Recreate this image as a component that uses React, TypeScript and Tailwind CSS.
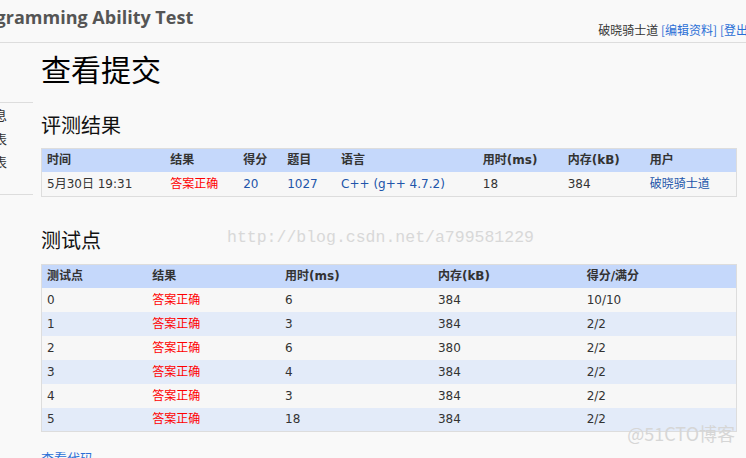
import React from 'react';

const summaryCols = [124, 73, 44, 54, 142, 85, 82, 92];
const caseCols = [106, 133, 153, 149, 155];

const cases = [
  { id: '0', time: '6', mem: '384', score: '10/10' },
  { id: '1', time: '3', mem: '384', score: '2/2' },
  { id: '2', time: '6', mem: '380', score: '2/2' },
  { id: '3', time: '4', mem: '384', score: '2/2' },
  { id: '4', time: '3', mem: '384', score: '2/2' },
  { id: '5', time: '18', mem: '384', score: '2/2' },
];

const cjk = { fontFamily: '"Noto Sans CJK SC", "Noto Sans", sans-serif' };
const cell = { fontFamily: '"DejaVu Sans", "Noto Sans CJK SC", sans-serif' };

const App: React.FC = () => {
  return (
    <div className="w-[746px] h-[458px] overflow-hidden bg-[#f9f9f9] text-[#333]" style={cjk}>
      {/* 顶部栏 */}
      <div className="h-[43px] border-b border-[#dddddd] flex overflow-hidden">
        <div
          className="shrink-0 -ml-[35px] pt-[4px] text-[18px] font-bold text-[#555] whitespace-nowrap"
          style={{ fontFamily: '"Open Sans", sans-serif' }}
        >
          Programming Ability Test
        </div>
        <div className="shrink-0 ml-auto pt-[21px] text-[12px] whitespace-nowrap -mr-[6px]">
          破晓骑士道 <span className="text-[#2a6fd6]">[编辑资料]</span>{' '}
          <span className="text-[#2a6fd6]">[登出]</span>
        </div>
      </div>

      <div className="flex">
        {/* 左侧导航 */}
        <div className="w-[33px] shrink-0 overflow-hidden pt-[59px]">
          <div className="border-t border-[#dddddd] pb-[20px] border-b text-[13px] leading-[23.5px]">
            <div className="-ml-[45px] whitespace-nowrap">个人信息</div>
            <div className="-ml-[32px] whitespace-nowrap">排名表</div>
            <div className="-ml-[32px] whitespace-nowrap">提交表</div>
          </div>
        </div>

        {/* 主内容 */}
        <div className="ml-[8px] w-[696px]">
          <h1 className="mt-[5px] text-[30px] leading-[40px] text-black">查看提交</h1>

          <h2 className="mt-[23px] text-[20px] leading-[28px] text-[#111]">评测结果</h2>
          <table className="mt-[9px] table-fixed border-collapse border border-[#dddddd] text-[12px]" style={cell}>
            <colgroup>
              {summaryCols.map((w, i) => (
                <col key={i} style={{ width: w }} />
              ))}
            </colgroup>
            <thead>
              <tr className="bg-[#c5d8fb] h-[23px] text-left">
                <th className="pl-[5px] font-bold">时间</th>
                <th className="pl-[5px] font-bold">结果</th>
                <th className="pl-[5px] font-bold">得分</th>
                <th className="pl-[5px] font-bold">题目</th>
                <th className="pl-[5px] font-bold">语言</th>
                <th className="pl-[5px] font-bold">用时(ms)</th>
                <th className="pl-[5px] font-bold">内存(kB)</th>
                <th className="pl-[5px] font-bold">用户</th>
              </tr>
            </thead>
            <tbody>
              <tr className="bg-[#f7f7f7] h-[25px]">
                <td className="pl-[5px]">5月30日 19:31</td>
                <td className="pl-[5px] text-[#ff0000]">答案正确</td>
                <td className="pl-[5px] text-[#2255aa]">20</td>
                <td className="pl-[5px] text-[#2255aa]">1027</td>
                <td className="pl-[5px] text-[#2255aa]">C++ (g++ 4.7.2)</td>
                <td className="pl-[5px]">18</td>
                <td className="pl-[5px]">384</td>
                <td className="pl-[5px] text-[#2255aa]">破晓骑士道</td>
              </tr>
            </tbody>
          </table>

          <div className="mt-[29px] flex items-end">
            <h2 className="text-[20px] leading-[28px] text-[#111]">测试点</h2>
            <span
              className="ml-[126px] mb-[3px] text-[16.5px] text-[#d8d8d8] whitespace-nowrap"
              style={{ fontFamily: '"Liberation Mono", monospace' }}
            >
              http://blog.csdn.net/a799581229
            </span>
          </div>
          <table className="mt-[10px] table-fixed border-collapse border border-[#dddddd] text-[12px]" style={cell}>
            <colgroup>
              {caseCols.map((w, i) => (
                <col key={i} style={{ width: w }} />
              ))}
            </colgroup>
            <thead>
              <tr className="bg-[#c5d8fb] h-[23px] text-left">
                <th className="pl-[5px] font-bold">测试点</th>
                <th className="pl-[5px] font-bold">结果</th>
                <th className="pl-[5px] font-bold">用时(ms)</th>
                <th className="pl-[5px] font-bold">内存(kB)</th>
                <th className="pl-[5px] font-bold">得分/满分</th>
              </tr>
            </thead>
            <tbody>
              {cases.map((c, i) => (
                <tr key={c.id} className={i % 2 === 0 ? 'bg-[#f7f7f7] h-[24px]' : 'bg-[#e3ebf9] h-[24px]'}>
                  <td className="pl-[5px]">{c.id}</td>
                  <td className="pl-[5px] text-[#ff0000]">答案正确</td>
                  <td className="pl-[5px]">{c.time}</td>
                  <td className="pl-[5px]">{c.mem}</td>
                  <td className="pl-[5px]">{c.score}</td>
                </tr>
              ))}
            </tbody>
          </table>

          <div className="mt-[16px] flex justify-between">
            <span className="text-[13px] text-[#2a6fd6]">查看代码</span>
            <span className="-mt-[28px] mr-[2px] text-[18px] text-[#d6d6d6] whitespace-nowrap">@51CTO博客</span>
          </div>
        </div>
      </div>
    </div>
  );
};

export default App;
